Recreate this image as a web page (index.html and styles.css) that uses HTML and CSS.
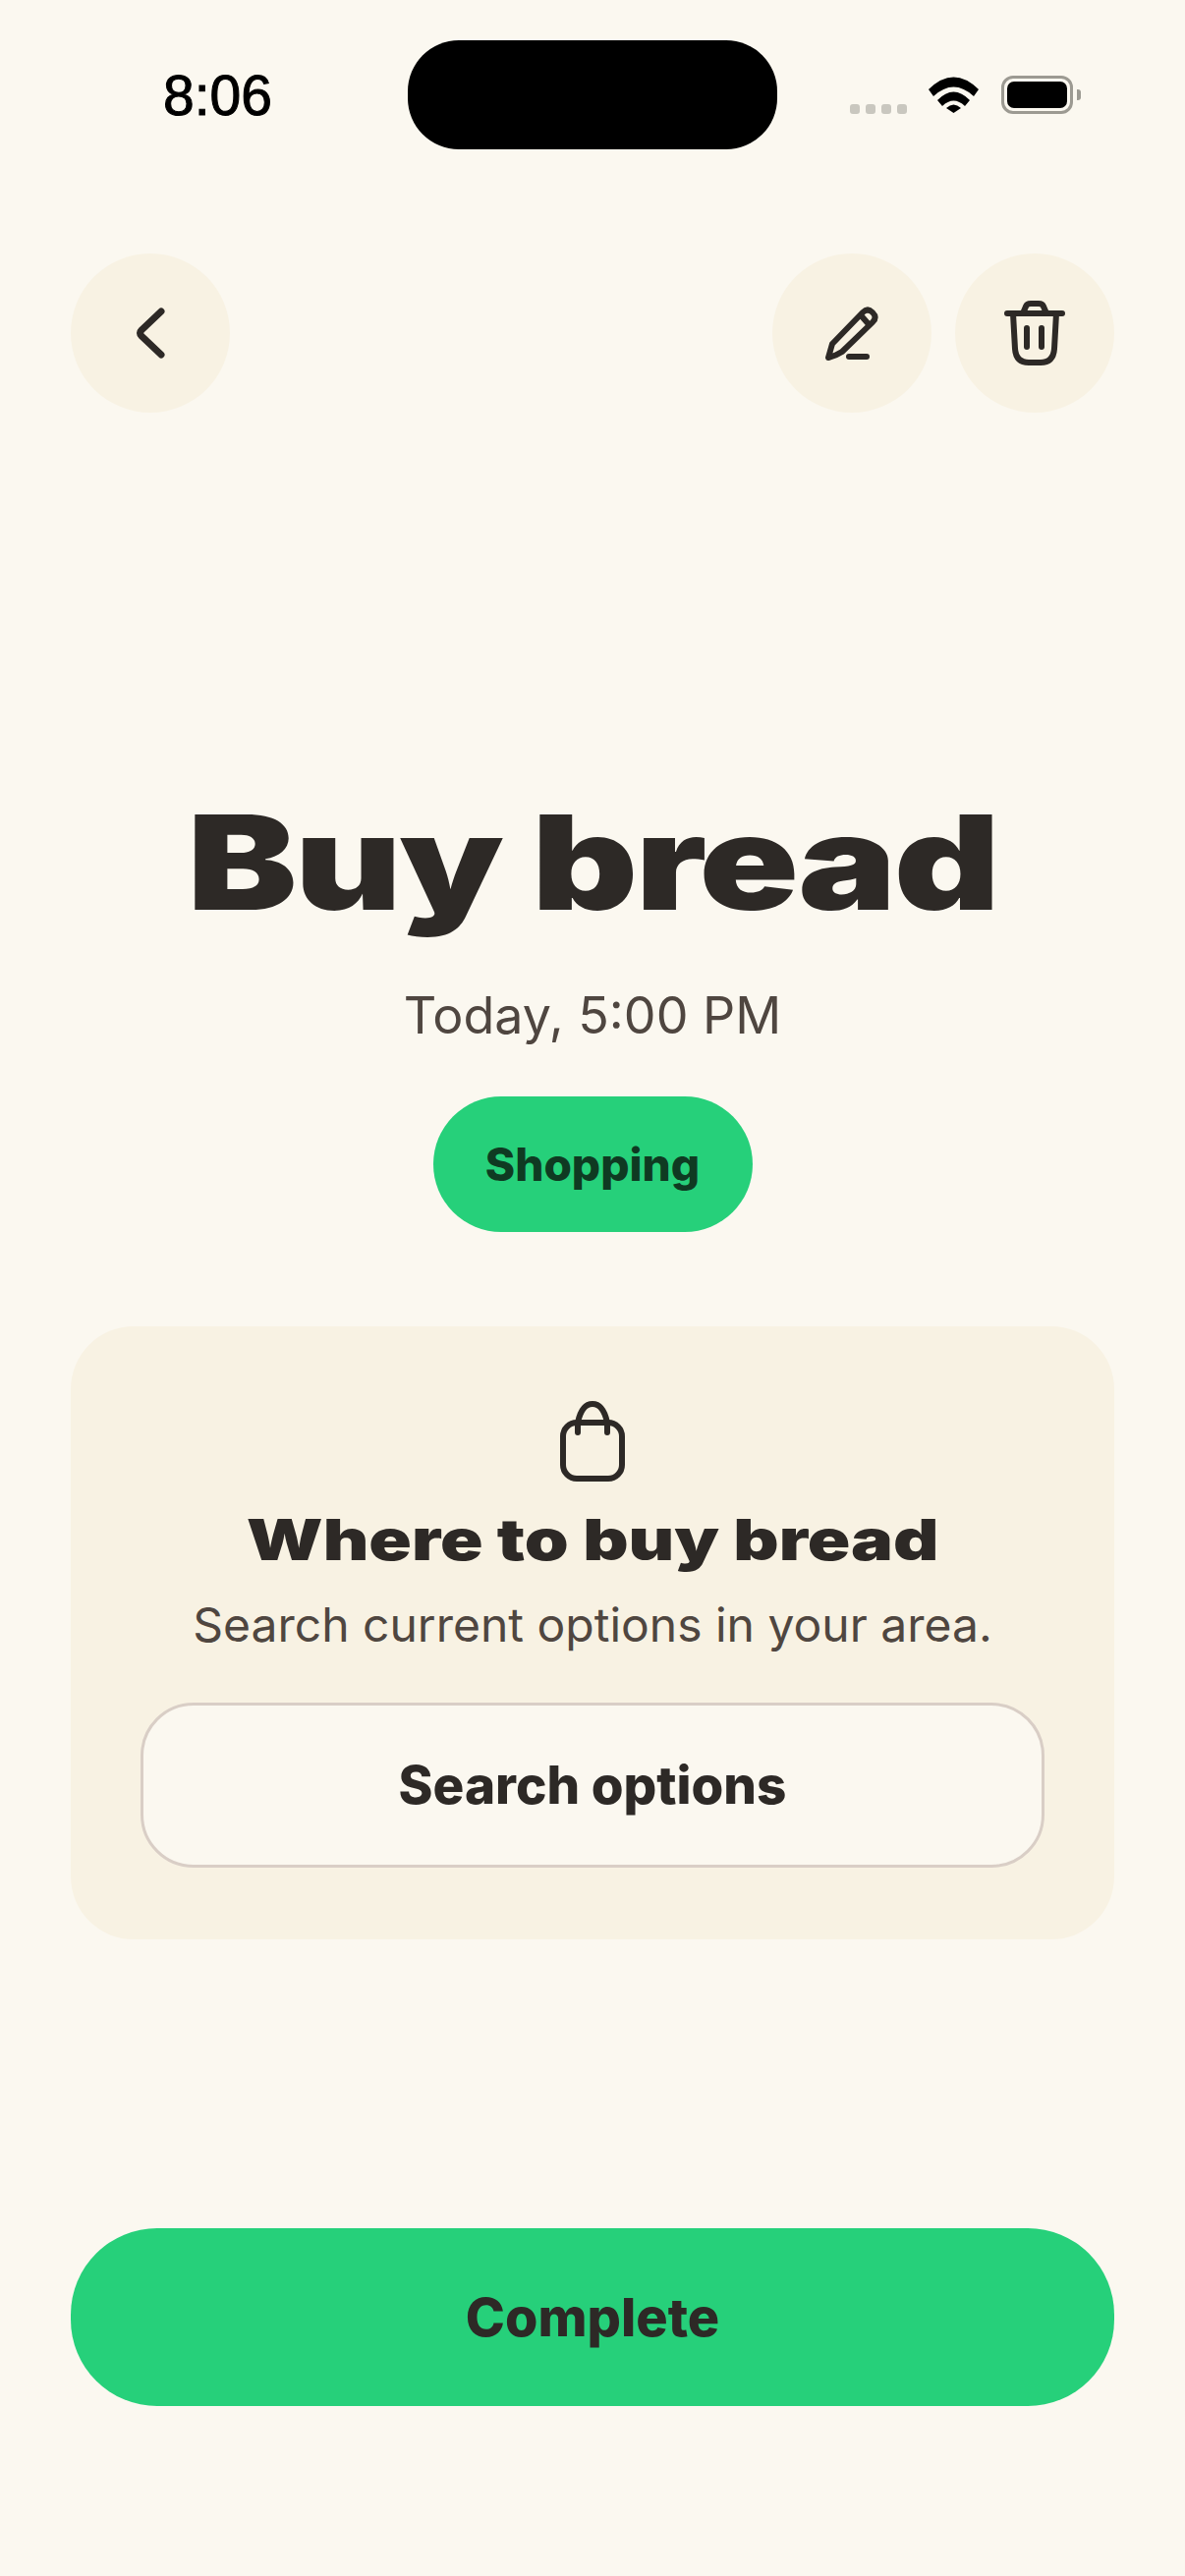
FILE: index.html
```html
<!DOCTYPE html>
<html lang="en">
<head>
    <meta charset="UTF-8">
    <meta name="viewport" content="width=device-width, initial-scale=1.0">
    <title>Buy bread</title>
    <link rel="stylesheet" href="styles.css">
</head>
<body>

<div class="screen">
    <div class="status-bar">
        <div class="status-time">8:06</div>
        <div class="island"></div>
        <div class="status-icons">
            <div class="signal-dots">
                <span></span><span></span><span></span><span></span>
            </div>
            <svg class="wifi" width="51" height="37" viewBox="0 0 51 37">
                <path d="M0 13 Q25.5 -12 51 13 L46 20 Q25.5 1 5 20 Z"/>
                <path d="M9 24 Q25.5 7 42 24 L37 30 Q25.5 19 14 30 Z"/>
                <path d="M25.5 37 L18 32 Q25.5 25 33 32 Z"/>
            </svg>
            <div class="battery">
                <div class="battery-fill"></div>
            </div>
            <div class="battery-tip"></div>
        </div>
    </div>

    <div class="top-nav">
        <button class="round-button">
            <svg class="icon" width="72" height="72" viewBox="0 0 72 72">
                <path class="chevron" d="M47 14 L27 33 Q24 36 27 39 L47 58"/>
            </svg>
        </button>
        <div class="nav-actions">
            <button class="round-button">
                <svg class="icon" width="72" height="72" viewBox="0 0 72 72">
                    <path d="M12 61 L16 47 L47 15 Q52 10 57 15 Q62 20 57 25 L26 55 Q20 59 12 61 Z"/>
                    <path d="M46 19 L53 27"/>
                    <path d="M33 60 H51"/>
                </svg>
            </button>
            <button class="round-button">
                <svg class="icon" width="72" height="72" viewBox="0 0 72 72">
                    <path d="M8 16 H64"/>
                    <path d="M24 16 L27 9 Q28 6 32 6 H40 Q44 6 45 9 L48 16"/>
                    <path d="M14 16 L16 52 Q17 66 30 66 H42 Q55 66 56 52 L58 16"/>
                    <path d="M28 31 V50"/>
                    <path d="M43 31 V50"/>
                </svg>
            </button>
        </div>
    </div>

    <div class="task-header">
        <h1><span>Buy bread</span></h1>
        <p class="task-time">Today, 5:00 PM</p>
        <div class="tag">Shopping</div>
    </div>

    <div class="card">
        <svg class="icon bag" width="72" height="88" viewBox="0 0 72 88">
            <rect x="6" y="25" width="60" height="57" rx="14"/>
            <path d="M21 35 V25 Q25 6 36 6 Q47 6 51 25 V35"/>
        </svg>
        <h2><span>Where to buy bread</span></h2>
        <p>Search current options in your area.</p>
        <button class="search-button">Search options</button>
    </div>

    <button class="complete-button">Complete</button>
</div>

</body>
</html>
```

FILE: styles.css
```css
body {
    font-family: 'Inter', 'Liberation Sans', sans-serif;
    margin: 0;
    background-color: #fbf8f0;
    color: #2d2926;
}

button {
    font-family: inherit;
    border: none;
    padding: 0;
    color: inherit;
}

.screen {
    display: flex;
    flex-direction: column;
    width: 1206px;
    height: 2622px;
    overflow: hidden;
}

/* status bar */
.status-bar {
    display: flex;
    align-items: center;
    padding-top: 41px;
}

.status-time {
    width: 249px;
    padding-left: 166px;
    font-family: 'Liberation Sans', sans-serif;
    font-size: 57px;
    line-height: 60px;
    font-weight: 400;
    color: #000;
    -webkit-text-stroke: 1px #000;
}

.island {
    width: 376px;
    height: 111px;
    border-radius: 52px;
    background-color: #000;
}

.status-icons {
    display: flex;
    align-items: center;
    padding-left: 74px;
    height: 111px;
}

.signal-dots {
    display: flex;
    gap: 6px;
    margin-top: 28px;
    margin-right: 22px;
}

.signal-dots span {
    width: 10px;
    height: 10px;
    border-radius: 3px;
    background-color: #c9c7bf;
}

.wifi {
    fill: #000;
    margin-right: 23px;
}

.battery {
    box-sizing: border-box;
    width: 73px;
    height: 39px;
    padding: 3px;
    border: 3px solid #9c9a92;
    border-radius: 12px;
}

.battery-fill {
    height: 100%;
    border-radius: 7px;
    background-color: #000;
}

.battery-tip {
    width: 4px;
    height: 11px;
    margin-left: 4px;
    border-radius: 0 3px 3px 0;
    background-color: #9c9a92;
}

/* top buttons */
.top-nav {
    display: flex;
    justify-content: space-between;
    margin-top: 106px;
    padding: 0 72px;
}

.nav-actions {
    display: flex;
    gap: 24px;
}

.round-button {
    display: flex;
    align-items: center;
    justify-content: center;
    width: 162px;
    height: 162px;
    border-radius: 50%;
    background-color: #f8f2e3;
}

.icon {
    fill: none;
    stroke: #2d2926;
    stroke-width: 6;
    stroke-linecap: round;
    stroke-linejoin: round;
}

.icon .chevron {
    stroke-width: 7;
}

/* title block */
.task-header {
    display: flex;
    flex-direction: column;
    align-items: center;
    margin-top: 382px;
}

h1 {
    margin: 0;
    font-size: 134px;
    line-height: 150px;
    font-weight: 900;
    letter-spacing: -2px;
}

h1 span {
    display: inline-block;
    transform: scaleX(1.25);
}

.task-time {
    margin: 47px 0 0;
    font-size: 52px;
    line-height: 70px;
    font-weight: 400;
    color: #4f4640;
}

.tag {
    display: flex;
    align-items: center;
    justify-content: center;
    width: 325px;
    height: 138px;
    margin-top: 47px;
    border-radius: 69px;
    background-color: #26d07a;
    color: #0f3a22;
    font-size: 46px;
    font-weight: 800;
}

/* card */
.card {
    display: flex;
    flex-direction: column;
    align-items: center;
    box-sizing: border-box;
    height: 624px;
    margin: 96px 72px 0;
    padding: 73px 71px 0;
    border-radius: 64px;
    background-color: #f8f2e3;
}

.card h2 {
    margin: 21px 0 0;
    font-size: 58px;
    line-height: 70px;
    font-weight: 900;
}

.card h2 span {
    display: inline-block;
    transform: scaleX(1.24);
}

.card p {
    margin: 20px 0 0;
    font-size: 48px;
    line-height: 64px;
    color: #4f4640;
}

.search-button {
    box-sizing: border-box;
    width: 920px;
    height: 168px;
    margin-top: 47px;
    border: 3px solid #d9cec6;
    border-radius: 54px;
    background-color: #fbf8f0;
    font-size: 53px;
    font-weight: 800;
}

.complete-button {
    height: 181px;
    margin: 294px 72px 0;
    border-radius: 88px;
    background-color: #26d07a;
    font-size: 54px;
    font-weight: 800;
}
```
